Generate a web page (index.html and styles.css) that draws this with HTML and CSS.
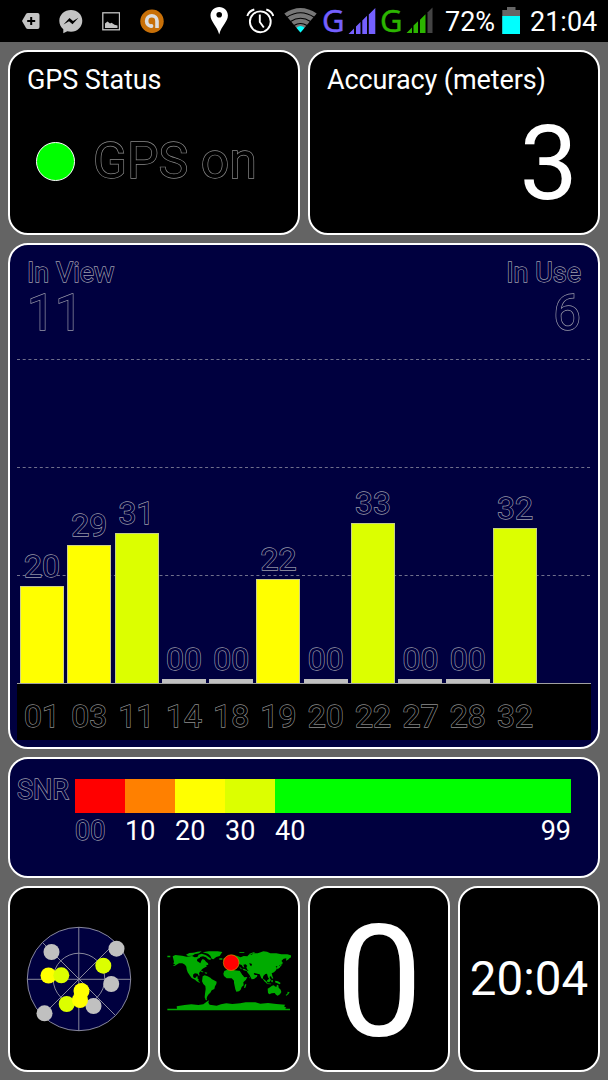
FILE: index.html
```html
<!DOCTYPE html>
<html lang="en">
<head>
    <meta charset="UTF-8">
    <meta name="viewport" content="width=device-width, initial-scale=1.0">
    <title>GPS Test</title>
    <link rel="stylesheet" href="styles.css">
</head>
<body>

    <div class="status-bar">
        <svg class="icon-tag" width="18" height="42" viewBox="22 0 18 42">
            <path d="M22 21l4-7q.6-1 2-1h9.500q2 0 2 2v12q0 2-2 2H28q-1.400 0-2-1z" fill="#c4c4c4"/>
            <path d="M31.200 17v8M27.200 21h8" stroke="#000" stroke-width="2"/>
        </svg>
        <svg class="icon-messenger" width="24" height="42" viewBox="59 0 24 42">
            <path d="M71 10c-6.500 0-11.700 4.700-11.700 10.700 0 3.600 1.500 6.500 4 8.500v4.100l4-2.100c1.100.3 2.400.5 3.700.5 6.300 0 11.300-4.800 11.300-11S77.300 10 71 10z" fill="#c4c4c4"/>
            <path d="M63.500 24.500l6-6.500 3.500 3 5.500-3.200-6 6.500-3.500-3z" fill="#000"/>
        </svg>
        <svg class="icon-image" width="18" height="42" viewBox="102 0 18 42">
            <rect x="102.800" y="12.800" width="16.700" height="17" fill="none" stroke="#c4c4c4" stroke-width="1.300"/>
            <path d="M105 28v-4.500l2.500-2 2.500 2 1.500-.8 3 2 3 .8V28z" fill="#c4c4c4"/>
        </svg>
        <svg class="icon-avast" width="24" height="42" viewBox="140 0 24 42">
            <circle cx="152" cy="21.200" r="11.700" fill="#c87008"/>
            <path d="M157 28v-7a5.200 5.200 0 1 0-5.200 5.200" fill="none" stroke="#ddd" stroke-width="3.600"/>
            <circle cx="151.800" cy="21.200" r="2" fill="#c87008"/>
            <circle cx="151.500" cy="26" r="1.900" fill="#ddd"/>
        </svg>
        <svg class="icon-pin" width="18" height="42" viewBox="210 0 18 42">
            <path fill-rule="evenodd" d="M219.200 7c-5 0-8.700 3.700-8.700 8.500 0 6.200 6.300 10 8.700 19 2.400-9 8.700-12.800 8.700-19 0-4.800-3.700-8.500-8.700-8.500zm0 5a2.800 2.800 0 1 1 0 5.600 2.800 2.800 0 0 1 0-5.600z" fill="#fff"/>
        </svg>
        <svg class="icon-alarm" width="28" height="42" viewBox="246 0 28 42">
            <g fill="none" stroke="#fff" stroke-width="1.900">
                <circle cx="260.300" cy="21.800" r="10.400"/>
                <path d="M259.800 14.500v7.500l4 5.500M247.300 16q1.500-5 7-6.500M273.300 16q-1.500-5-7-6.500"/>
            </g>
        </svg>
        <svg class="icon-wifi" width="34" height="42" viewBox="284 0 34 42">
            <path d="M300.500 32.500L284.300 13.500Q300.500 2.500 316.700 13.500z" fill="#777"/>
            <path d="M286.500 17.500Q300.500 8 314.500 17.500M290.500 21.500Q300.500 15 310.500 21.500M294 25.500Q300.500 21.500 307 25.500" fill="none" stroke="#000" stroke-width="1.200"/>
            <path d="M300.500 32.500l-4-4.700q4-3.400 8 0z" fill="#0ff"/>
        </svg>
        <span class="network network-one">G</span>
        <svg class="icon-signal" width="28" height="42" viewBox="0 0 28 42">
            <path d="M.5 34L6 28.500V34zM8 34v-7.500l4.500-4.500v12zM14.300 34V20.500l4.700-4.700V34zM20.800 34V14.500L27.300 8v26z" fill="#7560ff"/>
        </svg>
        <span class="network network-two">G</span>
        <svg class="icon-signal" width="28" height="42" viewBox="0 0 28 42">
            <path d="M.5 33L6 27.500V33zM7.500 33v-7.500l4.500-4.300V33zM14 33V19.700l5.500-5.500V33z" fill="#2cb500"/>
            <path d="M21.500 33V12.500l5-5V33z" fill="#444"/>
        </svg>
        <span class="battery-level">72%</span>
        <svg class="icon-battery" width="18" height="42" viewBox="502 0 18 42">
            <path d="M502.300 34V10h4.700V7h8.500v3h4.500v24z" fill="#666"/>
            <path d="M502.300 16H520v18h-17.700z" fill="#0ff"/>
        </svg>
        <span class="clock">21:04</span>
    </div>

    <div class="container">
        <div class="row">
            <div class="card gps-status">
                <h2>GPS Status</h2>
                <div class="gps-state">
                    <span class="gps-light"></span>
                    <span class="gps-text outline">GPS on</span>
                </div>
            </div>
            <div class="card accuracy">
                <h2>Accuracy (meters)</h2>
                <p class="accuracy-value">3</p>
            </div>
        </div>

        <div class="card chart">
            <div class="chart-header">
                <div>
                    <h3 class="outline">In View</h3>
                    <p class="outline">11</p>
                </div>
                <div class="in-use">
                    <h3 class="outline">In Use</h3>
                    <p class="outline">6</p>
                </div>
            </div>
            <div class="plot">
                <svg class="grid-lines" width="574" height="325" viewBox="0 0 574 325">
                    <path d="M0 .5h573M0 108.500h573M0 216.500h573"/>
                </svg>
                <div class="bars" id="bars"></div>
            </div>
            <div class="axis" id="axis"></div>
        </div>

        <div class="card snr">
            <span class="snr-label outline">SNR</span>
            <div class="scale">
                <div class="level"><i class="red"></i><span class="outline">00</span></div>
                <div class="level"><i class="orange"></i><span>10</span></div>
                <div class="level"><i class="yellow"></i><span>20</span></div>
                <div class="level"><i class="lime"></i><span>30</span></div>
                <div class="level last"><i class="green"></i><span>40</span><span>99</span></div>
            </div>
        </div>

        <div class="row tiles">
            <div class="card tile">
                <svg width="110" height="110" viewBox="24 924 110 110">
                    <circle cx="79" cy="979" r="51.700" fill="#00003f"/>
                    <g fill="none" stroke="#88889c" stroke-width="1">
                        <circle cx="79" cy="979" r="51.700"/>
                        <circle cx="79" cy="979" r="25.800"/>
                        <path d="M27 979.300h104M78.800 927v104M42.400 942.400l73.200 73.200M115.600 942.400l-73.200 73.200"/>
                    </g>
                    <g fill="#c0c0c0">
                        <circle cx="51.500" cy="952" r="8"/>
                        <circle cx="116.500" cy="948.700" r="8"/>
                        <circle cx="111.200" cy="984" r="8"/>
                        <circle cx="93.500" cy="1006" r="8"/>
                        <circle cx="44.500" cy="1013.300" r="8"/>
                    </g>
                    <circle cx="48.500" cy="975.500" r="8" fill="#ff0"/>
                    <circle cx="61.300" cy="975.300" r="8" fill="#dcff00"/>
                    <circle cx="103.300" cy="965.700" r="8" fill="#dcff00"/>
                    <circle cx="66.700" cy="1004" r="8" fill="#dcff00"/>
                    <circle cx="80" cy="1000" r="8" fill="#ff0"/>
                    <circle cx="81.500" cy="991" r="8" fill="#ff0"/>
                </svg>
            </div>
            <div class="card tile">
                <svg class="map" width="124" height="62" viewBox="35 59 372 186">
                    <g fill="#00ab00">
                        <!-- Americas -->
                        <path d="M36 76h9v5h-9zM52 78l8-4 20 2 14 3 16-2 8 4 8-1 4-7 5 1-1 8-8 4-1 6 6 4 4 3 3-8 4-5 6 3 4 5 6 5 1 4-7 2 3 3-8 4-5 3-4 4-5 6-2 5 2 5-3 1-3-6-8-1-5 3-1 6 3 5 5-1 3-4 4 1-2 5 4 3-1 5 5 4-2 1-8-4-5-5-10-5-5-7-7-10-3-9-1-8-4-6-8-4-10 0-12 7-7 1 8-5-6-2 2-6z"/>
                        <path d="M92 73l10-5 12-1 5 4-8 5-13 1zM112 68l14-4 13-1-8 6-10 2zM130 73l9-3 12 4 8 5 8 6-2 4-7-2-6-6-9-3-9 2z"/>
                        <path d="M142 66l18-3 27 0 14 2-4 6-4 6-10 3-9 7-5-2-4-9-7-6zM128 119l8 1 9 5-4 1zM148 126l8 1-2 3-5-1z"/>
                        <path d="M142 138l6-3 9 3 8 4 5 5 6 3 8 4-1 7-4 7-2 8-8 4-4 7-5 5-4 6-2 6 1 6-4-1-3-8 1-11 2-14-1-9-6-6-4-8 1-7z"/>
                        <!-- Europe, Africa and Asia -->
                        <path d="M192 84h9v4h-9zM206 92l6-7 10-8 10-4 14 4 10 4 9-4 11 1 4-5 9 0 6-4 12 0 9-3 8-3 11 1 10 5 18 0 15 3 18 0 10 3 9 0-2 6-9 1-6 6-6 3 1-7-8 1-7 7 4 4-4 7-6 1 1 8-5 1-3-6-4 2 4 5-3 6-6 6-7 3 2 6-3 5-4-3-1 5 4 7-3 1-6-9-3-11-5 1-6 6-2 9-4-2-5-12-7-2-9-2-2 3 4 3 7 0-1 5-9 7-7 1-7-14-5-6-3-5-9-2-4-5-4 2-4-6-6-2-4 5-7-2-5 5-10-2 2-8 7-1-2-4zM205 92l-1-7 5-3 2 9zM250 66l16-1 2 2-14 1zM283 74l-2-3 13-5 6 1-10 3z"/>
                        <path d="M207 122l9-4 14-3 7 5 13 1 7 1 4 11 6 8 9-1-4 8-8 8 1 9-6 5-3 8-5 5-8 1-3-7-2-10-2-10 0-6-7-7-15 0-8-7-2-7zM268 164l4-4 1 3-3 9-4 1z"/>
                        <path d="M281 139l3 4-2 1zM363 111l8-3 7-6 1 3-7 7-5 5zM376 95l4-1 2 8-3-1zM346 134l4 1 4 9-4 1zM321 144l5 3 10 9-2 3-7-6zM335 150l7-5 4 5-4 6-6-1zM348 149l5 1-1 6-4-1zM334 159l14 1-1 2-13-1zM360 151l8 2 8 5-3 4-7-3-7-3z"/>
                        <!-- Australia and Antarctica -->
                        <path d="M337 175l7-4 6-5 6-1 2 3 5 2 2-7 4 2 1 7 6 6 2 7-4 7-7 4-5-3-4-5-9 1-7 3-4-4zM365 193h5l-2 4zM397 184l6 2-4 6-6 4-2-2 5-4z"/>
                        <path d="M36 235h29l-1-7 24-4 20-2 21 2 15-2 10-8 7-4-2 7 4 6 21 3 13-4 16-3 18 2 24-2 16-3 29 0 15 4 23-2 25 3 27 2-4 5 7 4-4 3h15v5H36z"/>
                    </g>
                    <!-- seas -->
                    <path d="M250 101l9 3 4 6 4 2-3-9 7-1 5 5-3 3 3 8 4 2-4 1-8-5-9-1-5-5-6-1zM253 118l5 4 6 11-3 0-7-10zM282 98l8 3-2 7-4-3z" fill="#000"/>
                    <circle cx="227.500" cy="97" r="23.500" fill="#f00" stroke="#d89000" stroke-width="2"/>
                </svg>
            </div>
            <div class="card tile speed">0</div>
            <div class="card tile time">20:04</div>
        </div>
    </div>

    <script>
        const satellites = [
            { id: "01", snr: "20", height: 97, color: "yellow" },
            { id: "03", snr: "29", height: 138, color: "yellow" },
            { id: "11", snr: "31", height: 150, color: "lime" },
            { id: "14", snr: "00", height: 4, color: "gray" },
            { id: "18", snr: "00", height: 4, color: "gray" },
            { id: "19", snr: "22", height: 104, color: "yellow" },
            { id: "20", snr: "00", height: 4, color: "gray" },
            { id: "22", snr: "33", height: 160, color: "lime" },
            { id: "27", snr: "00", height: 4, color: "gray" },
            { id: "28", snr: "00", height: 4, color: "gray" },
            { id: "32", snr: "32", height: 155, color: "lime" }
        ];

        satellites.forEach((sat) => {
            document.getElementById("bars").innerHTML += `<div class="column">
                <span class="outline">${sat.snr}</span>
                <div class="bar ${sat.color}" style="height: ${sat.height}px"></div>
            </div>`;
            document.getElementById("axis").innerHTML += `<span class="outline">${sat.id}</span>`;
        });
    </script>

</body>
</html>
```
FILE: styles.css
```css
* {
    box-sizing: border-box;
}
body {
    margin: 0;
    height: 1080px;
    overflow: hidden;
    background-color: #646464;
    color: white;
    font-family: Roboto, "Liberation Sans", sans-serif;
}
h2, h3, p {
    margin: 0;
    font-weight: normal;
}
svg {
    display: block;
    flex: none;
}
.outline {
    color: #00003f;
    -webkit-text-stroke: 1.3px #9c9cab;
    paint-order: stroke fill;
}
.gps-text, .axis .outline {
    color: black;
    -webkit-text-stroke-color: #8c8c8c;
}
.status-bar {
    display: flex;
    height: 42px;
    padding-left: 22px;
    background: black;
    font-size: 27px;
    line-height: 45px;
}
.icon-messenger {
    margin-left: 19px;
}
.icon-image {
    margin-left: 19px;
}
.icon-avast {
    margin-left: 20px;
}
.icon-pin {
    margin-left: 46px;
}
.icon-alarm {
    margin-left: 18px;
}
.icon-wifi {
    margin-left: 10px;
}
.network {
    width: 25px;
    margin-left: 4px;
    font-family: "Noto Sans", sans-serif;
    font-size: 31px;
    line-height: 41px;
    -webkit-text-stroke: 0.4px;
}
.network-one {
    color: #7560ff;
}
.network-two {
    color: #2cb500;
}
.icon-signal {
    margin-left: 1px;
}
.battery-level {
    width: 57px;
    margin-left: 11px;
}
.clock {
    margin-left: 10px;
}
.container {
    display: flex;
    flex-direction: column;
    gap: 8px;
    padding: 8px;
}
.row {
    display: flex;
    gap: 8px;
    height: 185px;
}
.card {
    flex: 1;
    border: 2px solid white;
    border-radius: 20px;
    background: black;
}
.row h2 {
    padding-left: 17px;
    font-size: 27px;
    line-height: 32px;
    margin-top: 12px;
    letter-spacing: -0.1px;
}
.gps-state {
    display: flex;
    align-items: center;
    margin: 35px 0 0 26px;
}
.gps-light {
    width: 39px;
    height: 39px;
    border: 1px solid white;
    border-radius: 50%;
    background: #0f0;
}
.gps-text {
    margin-left: 18px;
    font-size: 50px;
    line-height: 60px;
}
.accuracy-value {
    padding: 16px 20px 0 0;
    font-size: 104px;
    line-height: 104px;
    text-align: right;
}
.chart {
    flex: none;
    height: 506px;
    padding: 0 7px;
    background: #00003f;
}
.chart-header {
    display: flex;
    justify-content: space-between;
    height: 114px;
    padding: 12px 10px 0;
}
.chart-header h3 {
    font-size: 27px;
    line-height: 32px;
}
.chart-header p {
    font-size: 50px;
    line-height: 48px;
}
.in-use {
    text-align: right;
}
.plot {
    position: relative;
    height: 325px;
    border-bottom: 1px solid #a0a0a0;
}
.grid-lines {
    position: absolute;
    top: 0;
    left: 0;
    fill: none;
    stroke: #70708c;
    stroke-width: 1;
    stroke-dasharray: 3 2.7;
}
.bars, .axis {
    display: flex;
    gap: 3.3px;
    padding-left: 3px;
    font-size: 32px;
    text-align: center;
}
.bars {
    position: relative;
    height: 324px;
    align-items: flex-end;
}
.column {
    width: 44px;
}
.column span {
    display: block;
    line-height: 40px;
}
.bar {
    border: 1px solid rgba(190, 190, 190, 0.7);
    border-bottom: 0;
}
.axis {
    height: 56px;
    background: black;
    line-height: 65px;
}
.axis span {
    width: 44px;
}
.red {
    background: #f00;
}
.orange {
    background: #ff8000;
}
.yellow {
    background: #ff0;
}
.lime {
    background: #dcff00;
}
.green {
    background: #0f0;
}
.gray {
    background: #c0c0c0;
}
.snr {
    display: flex;
    flex: none;
    height: 121px;
    padding: 20px 27px 0 7px;
    background: #00003f;
    font-size: 27px;
}
.snr-label {
    width: 58px;
    line-height: 22px;
}
.scale {
    display: flex;
    flex: 1;
}
.level {
    width: 50px;
}
.level i {
    display: block;
    height: 34px;
}
.level span {
    line-height: 37px;
}
.last {
    display: flex;
    flex: 1;
    flex-wrap: wrap;
    justify-content: space-between;
    align-content: flex-start;
}
.last i {
    width: 100%;
}
.tiles {
    height: 186px;
}
.tile {
    display: flex;
    align-items: center;
    justify-content: center;
}
.map {
    margin-top: 3px;
}
.speed {
    padding-top: 4px;
    font-size: 156px;
}
.time {
    font-size: 47.5px;
}
```
